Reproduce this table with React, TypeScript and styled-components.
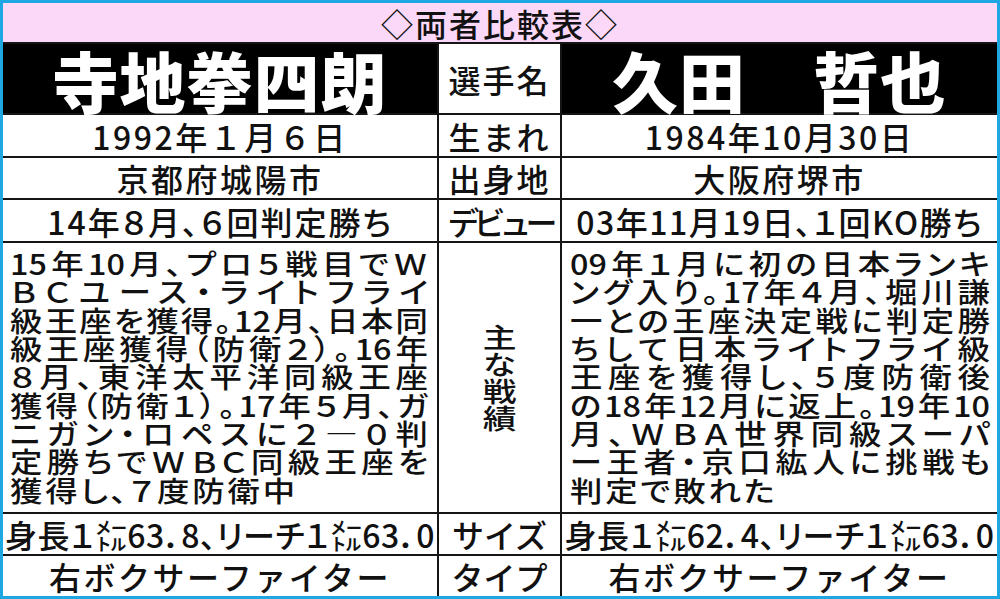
import React from "react";
import styled, { createGlobalStyle } from "styled-components";

const GlobalStyle = createGlobalStyle`
  html, body { margin: 0; padding: 0; background: #ffffff; }
  body { font-family: "Noto Sans CJK JP", "Noto Sans", sans-serif; }
`;

const STRETCH = 1.14;

const Frame = styled.div`
  width: 1000px;
  height: 599px;
  box-sizing: border-box;
  padding: 3px;
  background: #1fa7e1;
`;

const Table = styled.div`
  height: 100%;
  display: grid;
  grid-template-columns: 434px 121px 435px;
  grid-template-rows: 39px 69px 41px 40px 41px 269px 40px 40px;
  gap: 2px;
  background: #151515;
  color: #111111;
  font-family: "Noto Sans CJK JP", "Noto Sans", sans-serif;
  font-weight: 500;
`;

const Banner = styled.div`
  grid-column: 1 / -1;
  background: #fbd7f8;
  display: flex;
  align-items: center;
  justify-content: center;
  font-size: 32px;
  letter-spacing: 2px;
  line-height: 1;
  padding-top: 1px;
`;

const NameCell = styled.div`
  background: #000000;
  color: #ffffff;
  display: flex;
  align-items: center;
  justify-content: center;
  font-size: 66px;
  font-weight: 900;
  letter-spacing: 1px;
  line-height: 1;
`;

const LabelCell = styled.div<{ $squeeze?: number }>`
  background: #ffffff;
  display: flex;
  align-items: center;
  justify-content: center;
  font-size: 32px;
  line-height: 1;
  white-space: nowrap;
  letter-spacing: ${(p) => (p.$squeeze ?? 2)}px;
`;

const VerticalCell = styled.div`
  background: #ffffff;
  display: flex;
  align-items: center;
  justify-content: center;
`;

const VerticalText = styled.div`
  font-size: 27px;
  line-height: 1;
  writing-mode: vertical-rl;
  letter-spacing: 0;
  transform: scaleX(1.25);
`;

const ValueCell = styled.div<{ $spacing?: number; $palt?: boolean }>`
  background: #ffffff;
  display: flex;
  align-items: center;
  justify-content: center;
  font-size: 32px;
  line-height: 1;
  white-space: nowrap;
  letter-spacing: ${(p) => (p.$spacing ?? 2.5)}px;
  font-feature-settings: ${(p) => (p.$palt ? '"palt"' : "normal")};
`;

const Para = styled.div<{ $padL: number; $padR: number }>`
  background: #ffffff;
  display: flex;
  flex-direction: column;
  justify-content: center;
  overflow: hidden;
  padding: 0 ${(p) => p.$padR}px 2px ${(p) => p.$padL}px;
`;

const ParaBody = styled.div`
  width: calc(100% / ${STRETCH});
  transform: scaleX(${STRETCH});
  transform-origin: left center;
  font-size: 28.4px;
  font-feature-settings: "palt";
`;

const ParaLine = styled.div<{ $last?: boolean }>`
  height: 28.4px;
  line-height: 28.4px;
  white-space: nowrap;
  text-align: ${(p) => (p.$last ? "left" : "justify")};
  text-align-last: ${(p) => (p.$last ? "left" : "justify")};
  letter-spacing: ${(p) => (p.$last ? "2.5px" : "0")};
`;

const leftCareer = [
  "15年10月、プロ５戦目でＷ",
  "ＢＣユース・ライトフライ",
  "級王座を獲得。12月、日本同",
  "級王座獲得（防衛２）。16年",
  "８月、東洋太平洋同級王座",
  "獲得（防衛１）。17年５月、ガ",
  "ニガン・ロペスに２―０判",
  "定勝ちでＷＢＣ同級王座を",
  "獲得し、７度防衛中",
];

const rightCareer = [
  "09年１月に初の日本ランキ",
  "ング入り。17年４月、堀川謙",
  "一との王座決定戦に判定勝",
  "ちして日本ライトフライ級",
  "王座を獲得し、５度防衛後",
  "の18年12月に返上。19年10",
  "月、ＷＢＡ世界同級スーパ",
  "ー王者・京口紘人に挑戦も",
  "判定で敗れた",
];

const Career: React.FC<{ lines: string[]; padL: number; padR: number }> = ({ lines, padL, padR }) => (
  <Para $padL={padL} $padR={padR}>
    <ParaBody>
      {lines.map((l, i) => (
        <ParaLine key={i} $last={i === lines.length - 1}>
          {l}
        </ParaLine>
      ))}
    </ParaBody>
  </Para>
);

export default function App() {
  return (
    <>
      <GlobalStyle />
      <Frame>
        <Table>
          <Banner>◇両者比較表◇</Banner>

          <NameCell>寺地拳四朗</NameCell>
          <LabelCell>選手名</LabelCell>
          <NameCell>久田　哲也</NameCell>

          <ValueCell>1992年１月６日</ValueCell>
          <LabelCell>生まれ</LabelCell>
          <ValueCell>1984年10月30日</ValueCell>

          <ValueCell>京都府城陽市</ValueCell>
          <LabelCell>出身地</LabelCell>
          <ValueCell>大阪府堺市</ValueCell>

          <ValueCell $palt $spacing={2}>14年８月、６回判定勝ち</ValueCell>
          <LabelCell $squeeze={-6}>デビュー</LabelCell>
          <ValueCell $palt $spacing={1.5}>03年11月19日、１回KO勝ち</ValueCell>

          <Career lines={leftCareer} padL={7} padR={9} />
          <VerticalCell>
            <VerticalText>主な戦績</VerticalText>
          </VerticalCell>
          <Career lines={rightCareer} padL={8} padR={7} />

          <ValueCell $spacing={0.5} $palt>身長１㍍63．8、リーチ１㍍63．0</ValueCell>
          <LabelCell $squeeze={0}>サイズ</LabelCell>
          <ValueCell $spacing={0.5} $palt>身長１㍍62．4、リーチ１㍍63．0</ValueCell>

          <ValueCell>右ボクサーファイター</ValueCell>
          <LabelCell $squeeze={0}>タイプ</LabelCell>
          <ValueCell>右ボクサーファイター</ValueCell>
        </Table>
      </Frame>
    </>
  );
}
